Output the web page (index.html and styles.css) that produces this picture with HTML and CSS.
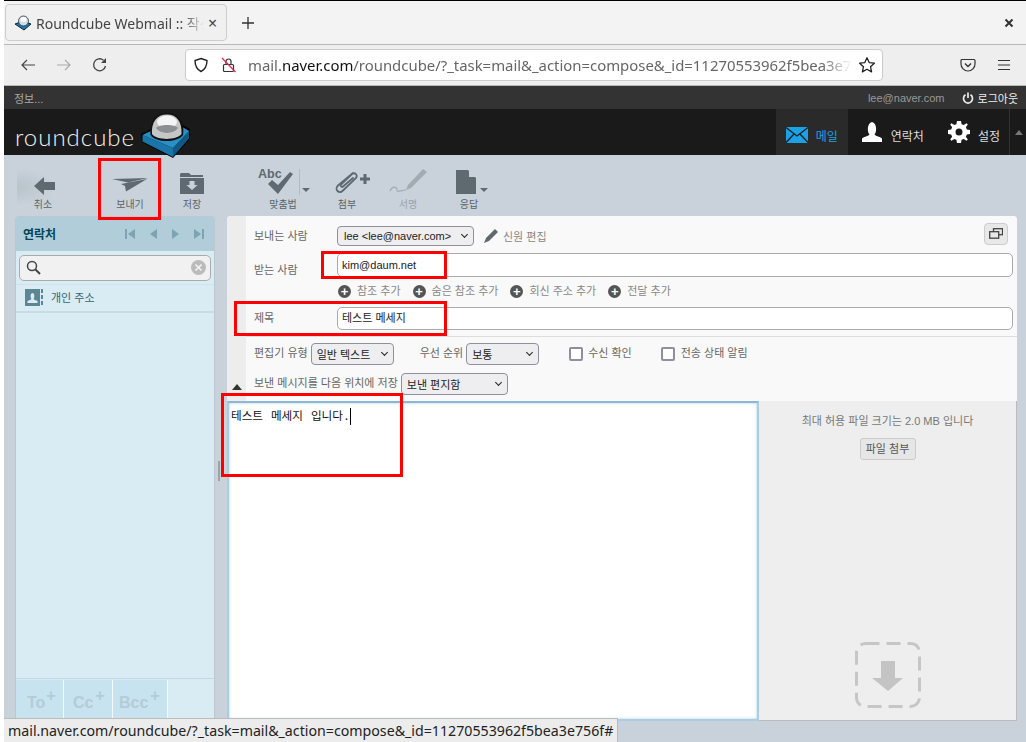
FILE: index.html
```html
<!DOCTYPE html>
<html lang="ko">
<head>
	<meta charset="utf-8" />
	<title>Roundcube Webmail :: 작성</title>
	<link rel="stylesheet" href="styles.css">
</head>
<body>
<div id="browser">
	<div class="tabbar">
		<div class="tab">
			<svg class="favicon" width="18" height="18" viewBox="0 0 18 18"><path d="M1 10 L9 7 L17 10 L10 16 Z" fill="#1b79ad" stroke="#123" stroke-width="1"/><ellipse cx="9.5" cy="7" rx="5" ry="5" fill="#d8dde2" stroke="#234" stroke-width=".8"/><ellipse cx="9.5" cy="5.5" rx="3" ry="2.4" fill="#fff"/></svg>
			<span class="tab-title">Roundcube Webmail :: 작성</span>
			<span class="tab-close">×</span>
		</div>
		<svg class="newtab" width="14" height="14" viewBox="0 0 14 14"><path d="M7 1V13M1 7H13" stroke="#333" stroke-width="1.3"/></svg>
		<svg class="winclose" width="10" height="10" viewBox="0 0 10 10"><path d="M1.5 1.5L8.5 8.5M8.5 1.5L1.5 8.5" stroke="#2e3436" stroke-width="2"/></svg>
	</div>
	<div class="navbar">
		<svg class="nav-icon" width="16" height="16" viewBox="0 0 16 16"><path d="M15 8H2M7 3L2 8L7 13" fill="none" stroke="#444" stroke-width="1.2"/></svg>
		<svg class="nav-icon off" width="16" height="16" viewBox="0 0 16 16"><path d="M1 8H14M9 3L14 8L9 13" fill="none" stroke="#aaa" stroke-width="1.2"/></svg>
		<svg class="nav-icon" width="16" height="16" viewBox="0 0 16 16"><path d="M13.5 9A6 6 0 1 1 11.5 3.2" fill="none" stroke="#444" stroke-width="1.3"/><path d="M14 1V6H9Z" fill="#444"/></svg>
		<div class="urlbar">
			<svg class="url-shield" width="16" height="16" viewBox="0 0 16 16"><path d="M8 1.5L14 3.5C14 9 12 12.5 8 14.5C4 12.5 2 9 2 3.5Z" fill="none" stroke="#222" stroke-width="1.4"/></svg>
			<svg class="url-lock" width="16" height="16" viewBox="0 0 16 16"><rect x="2.5" y="7.5" width="10" height="7" rx="1" fill="none" stroke="#333" stroke-width="1.2"/><path d="M5 7.5V4.5A2.5 2.5 0 0 1 10 4.5V7.5" fill="none" stroke="#333" stroke-width="1.2"/><path d="M1 1L14.5 15" stroke="#e22850" stroke-width="1.2"/></svg>
			<span class="url-text">mail.<b>naver.com</b>/roundcube/?_task=mail&amp;_action=compose&amp;_id=11270553962f5bea3e756f#</span>
			<svg class="url-star" width="18" height="18" viewBox="0 0 18 18"><path d="M9 1.8L11.2 6.6L16.4 7.2L12.5 10.7L13.6 15.9L9 13.3L4.4 15.9L5.5 10.7L1.6 7.2L6.8 6.6Z" fill="none" stroke="#222" stroke-width="1.3" stroke-linejoin="round"/></svg>
		</div>
		<svg class="pocket" width="16" height="16" viewBox="0 0 16 16"><path d="M2 2.5H14A1 1 0 0 1 15 3.5V7A7 7 0 0 1 1 7V3.5A1 1 0 0 1 2 2.5Z" fill="none" stroke="#333" stroke-width="1.2"/><path d="M5 6.5L8 9.5L11 6.5" fill="none" stroke="#333" stroke-width="1.4"/></svg>
		<svg class="hamburger" width="14" height="12" viewBox="0 0 14 12"><path d="M1 1.5H13M1 6H13M1 10.5H13" stroke="#333" stroke-width="1.2"/></svg>
	</div>

	<div id="page">
		<div class="topline">
			<span class="topline-info">정보...</span>
			<span class="topline-user">lee@naver.com</span>
			<span class="logout">
				<svg width="12" height="12" viewBox="0 0 12 12"><path d="M3.5 2.8A4.5 4.5 0 1 0 8.5 2.8" fill="none" stroke="#eee" stroke-width="1.7"/><path d="M6 .5V6" stroke="#eee" stroke-width="1.7"/></svg>
				로그아웃
			</span>
		</div>
		<div class="header">
			<div class="logo">
				<span class="logo-text">roundcube</span>
				<svg class="logo-cube" width="50" height="46" viewBox="0 0 50 46"><path d="M0 21L12 15L38 10L49 16L49 26L32 45L1 29Z" fill="#000"/><path d="M1.500 22L32 35V44L1.500 28.500Z" fill="#1b75a8"/><path d="M32 35L48 18V25.500L32 44Z" fill="#0f5a85"/><path d="M1.500 22L14 16L38 12L48 18L32 35Z" fill="#2a8fc6"/><path d="M9.500 22C8 8 15 0 26 0C37 0 44 8 42 22C36 30 15 30 9.500 22Z" fill="#111"/><path d="M11 21C10 9 16 1.500 26 1.500C36 1.500 41 9 40.500 21C35 27.500 16 27.500 11 21Z" fill="#c4c6c8"/><ellipse cx="26" cy="9" rx="10" ry="6.500" fill="#f4f4f4"/><path d="M15 15C20 21.500 32 21.500 37 15C34 11 18 11 15 15Z" fill="#8d9092"/></svg>
			</div>
			<nav class="taskbar">
				<a class="task active">
					<svg class="mail-icon" width="22" height="16" viewBox="0 0 22 16"><rect width="22" height="16" fill="#1ba1e6"/><path d="M0 .5L11 9L22 .5M0 15.500L8 7M22 15.500L14 7" fill="none" stroke="#1a1a1a" stroke-width="1.2"/></svg>
					<span>메일</span>
				</a>
				<a class="task contacts">
					<svg width="20" height="20" viewBox="0 0 20 20"><path d="M0 20V16.500C2 14.500 6 14.500 7.500 12.500C5 10 5 1 10 0C15 1 15 10 12.500 12.500C14 14.500 18 14.500 20 16.500V20Z" fill="#fff"/></svg>
					<span>연락처</span>
				</a>
				<a class="task settings">
					<svg width="22" height="22" viewBox="0 0 22 22"><path fill="#fff" fill-rule="evenodd" d="M9 0H13L13.600 3.200 15.700 4.100 18.500 2.200 19.800 3.500 17.900 6.300 18.800 8.400 22 9V13L18.800 13.600 17.900 15.700 19.800 18.500 18.500 19.800 15.700 17.900 13.600 18.800 13 22H9L8.400 18.800 6.300 17.900 3.500 19.800 2.200 18.500 4.100 15.700 3.200 13.600 0 13V9L3.200 8.400 4.100 6.300 2.200 3.500 3.500 2.200 6.300 4.100 8.400 3.200ZM11 7.500A3.500 3.500 0 1 0 11 14.500A3.500 3.500 0 1 0 11 7.500Z"/></svg>
					<span>설정</span>
				</a>
				<span class="task-toggle"></span>
			</nav>
		</div>

		<div class="toolbar">
			<a class="tbtn cancel">
				<svg width="21" height="18" viewBox="0 0 21 18"><path d="M0 9L10 0V5H21V13H10V18Z" fill="#5f6a70"/></svg>
				<span>취소</span>
			</a>
			<a class="tbtn send">
				<svg width="36" height="16" viewBox="0 0 36 16"><path d="M0 3L36 2L16 6.500Z M9 8L35 3L14 15.500L13 10Z" fill="#5f6a70"/></svg>
				<span>보내기</span>
			</a>
			<a class="tbtn savebtn">
				<svg width="26" height="22" viewBox="0 0 26 22"><path d="M2 1H10L12 3H24V5H1V2Z" fill="#5f6a70"/><path d="M1 6H25V22H1Z" fill="#5f6a70"/><path d="M10.500 9H15.500V13H18.500L13 18L7.500 13H10.500Z" fill="#c9d2da"/></svg>
				<span>저장</span>
			</a>
			<a class="tbtn spell">
				<span class="abc">Abc</span>
				<svg class="check" width="25" height="22" viewBox="0 0 25 22"><path d="M0 12L4 8L10 13L22 0L25 2L10 22Z" fill="#5f6a70"/></svg>
				<span class="tlabel">맞춤법</span>
				<i class="drop"></i>
			</a>
			<a class="tbtn attach">
				<svg width="36" height="23" viewBox="0 0 36 23"><path d="M19 2L4 14.500C0 18.500 5 23.500 9 19.500L22 7C24 4 21 1 18 3L7 13.500C6 15.500 8 16.500 9 15.500L19 7" fill="none" stroke="#5f6a70" stroke-width="1.800" stroke-linecap="round"/><path d="M31 3V13M26 8H36" stroke="#5f6a70" stroke-width="3"/></svg>
				<span>첨부</span>
			</a>
			<a class="tbtn sign">
				<svg width="38" height="27" viewBox="0 0 38 27"><path d="M34 1L38 4L22 20L17 22L19 17Z" fill="#a3abb1"/><path d="M1 23C3 18 8 18 8 22C8 25 12 22 17 22" fill="none" stroke="#a3abb1" stroke-width="1.200"/></svg>
				<span>서명</span>
			</a>
			<a class="tbtn reply">
				<svg width="20" height="24" viewBox="0 0 20 24"><path d="M0 0H12L20 8V24H0Z" fill="#5f6a70"/><path d="M13 0L20 7H13Z" fill="#c9d2da"/></svg>
				<span>응답</span>
				<i class="drop"></i>
			</a>
		</div>

		<div class="workspace">
			<aside class="contacts-panel">
				<div class="panel-head">
					<b>연락처</b>
					<span class="pager">
						<svg width="10" height="10" viewBox="0 0 10 10"><path d="M0 0H2V10H0ZM10 0V10L3 5Z" fill="#7ea3b3"/></svg>
						<svg width="7" height="10" viewBox="0 0 7 10"><path d="M7 0V10L0 5Z" fill="#7ea3b3"/></svg>
						<svg width="7" height="10" viewBox="0 0 7 10"><path d="M0 0V10L7 5Z" fill="#7ea3b3"/></svg>
						<svg width="10" height="10" viewBox="0 0 10 10"><path d="M10 0H8V10H10ZM0 0V10L7 5Z" fill="#7ea3b3"/></svg>
					</span>
				</div>
				<div class="search-wrap">
					<div class="searchbox">
						<svg width="15" height="15" viewBox="0 0 15 15"><circle cx="6" cy="6" r="4.500" fill="none" stroke="#444" stroke-width="1.500"/><path d="M9.500 9.500L14 14" stroke="#444" stroke-width="2"/></svg>
						<svg width="15" height="15" viewBox="0 0 15 15"><circle cx="7.500" cy="7.500" r="7.500" fill="#bbb"/><path d="M4.500 4.500L10.500 10.500M10.500 4.500L4.500 10.500" stroke="#f4f4f4" stroke-width="1.600"/></svg>
					</div>
				</div>
				<div class="source">
					<svg width="18" height="17" viewBox="0 0 18 17"><rect width="15" height="17" fill="#5c8595"/><path d="M2.500 14V12C4 11 6 11 6.500 10C5 8 5.500 4 7.500 4C9.500 4 10 8 8.500 10C9 11 11 11 12.500 12V14Z" fill="#d9ebf3"/><path d="M16 0H18V4H16ZM16 6H18V10H16ZM16 12H18V16H16Z" fill="#5c8595"/></svg>
					<span>개인 주소</span>
				</div>
				<div class="panel-fill"></div>
				<div class="recipients">
					<a>To<i>+</i></a>
					<a>Cc<i>+</i></a>
					<a>Bcc<i>+</i></a>
				</div>
			</aside>

			<main class="compose">
				<div class="headers">
					<div class="frow from-row">
						<label>보내는 사람</label>
						<span class="sel sel-from">lee &lt;lee@naver.com&gt;</span>
						<a class="sig-edit">
							<svg width="14" height="14" viewBox="0 0 14 14"><path d="M11 0L14 3L5 12L0 14L2 9Z" fill="#5f6a70"/></svg>
							신원 편집
						</a>
						<span class="popout"><svg width="14" height="11" viewBox="0 0 14 11"><rect x="4.500" y=".7" width="9" height="6" fill="none" stroke="#444" stroke-width="1.300"/><rect x=".7" y="3.700" width="9" height="6.500" fill="#e8e8e8" stroke="#444" stroke-width="1.300"/></svg></span>
					</div>
					<div class="frow to-row">
						<label>받는 사람</label>
						<div class="field">kim@daum.net</div>
					</div>
					<div class="links">
						<a>참조 추가</a>
						<a>숨은 참조 추가</a>
						<a>회신 주소 추가</a>
						<a>전달 추가</a>
					</div>
					<div class="frow subject-row">
						<label>제목</label>
						<div class="field subject">테스트 메세지</div>
					</div>
					<div class="options">
						<div class="opt-line">
							<label>편집기 유형</label>
							<span class="sel sel-editor">일반 텍스트</span>
							<label class="prio">우선 순위</label>
							<span class="sel sel-prio">보통</span>
							<span class="cbox first"></span><label>수신 확인</label>
							<span class="cbox"></span><label>전송 상태 알림</label>
						</div>
						<div class="opt-line">
							<label>보낸 메시지를 다음 위치에 저장</label>
							<span class="sel sel-store">보낸 편지함</span>
						</div>
						<i class="collapse"></i>
					</div>
				</div>
				<div class="bottom">
					<div class="editor">테스트 메세지 입니다.<i class="caret"></i></div>
					<div class="attachments">
						<p>최대 허용 파일 크기는 2.0 MB 입니다</p>
						<a class="attach-btn">파일 첨부</a>
						<svg class="dropzone" width="66" height="66" viewBox="0 0 66 66"><rect x="1.500" y="1.500" width="63" height="63" rx="9" fill="none" stroke="#c6c6c6" stroke-width="3" stroke-dasharray="14 7"/><path d="M26 19H40V36H48L33 49L17 36H26Z" fill="#c4c4c4"/></svg>
					</div>
				</div>
			</main>
		</div>
		<i class="splitter"></i>
	</div>
</div>

<div class="mark mark-send"></div>
<div class="mark mark-to"></div>
<div class="mark mark-subject"></div>
<div class="mark mark-body"></div>
<div class="statusbar">mail.naver.com/roundcube/?_task=mail&amp;_action=compose&amp;_id=11270553962f5bea3e756f#</div>
</body>
</html>
```

FILE: styles.css
```css
html, body {
	margin: 0;
	height: 742px;
	overflow: hidden;
}
body {
	background: #fff;
	font-family: "Liberation Sans", "Noto Sans CJK KR", sans-serif;
	font-size: 11px;
	color: #666;
}
a { color: inherit; }
label { white-space: nowrap; }

#browser {
	margin-left: 4px;
	height: 741px;
	border-top: 1px solid #000;
	display: flex;
	flex-direction: column;
	font-family: "Noto Sans", "Noto Sans CJK KR", sans-serif;
}

/* browser chrome */
.tabbar {
	height: 43px;
	background: #f3f3f3;
	border-bottom: 1px solid #b8b8b8;
	display: flex;
	align-items: center;
	padding-left: 1px;
}
.tab {
	width: 222px;
	height: 37px;
	box-sizing: border-box;
	background: #f0f0f0;
	border: 1px solid #ccc;
	border-radius: 4px;
	display: flex;
	align-items: center;
	padding-left: 8px;
}
.tab-title {
	margin-left: 4px;
	width: 168px;
	font-size: 14px;
	color: #444;
	white-space: nowrap;
	overflow: hidden;
	-webkit-mask-image: linear-gradient(to right, #000 88%, transparent);
}
.tab-close { font-size: 16px; color: #444; margin-left: 4px; }
.newtab { margin-left: 14px; }
.winclose { margin-left: auto; margin-right: 12px; }

.navbar {
	height: 40px;
	background: #eeeeee;
	border-bottom: 1px solid #b8b8b8;
	display: flex;
	align-items: center;
	padding-left: 16px;
}
.nav-icon { margin-right: 20px; }
.urlbar {
	width: 698px;
	height: 32px;
	box-sizing: border-box;
	margin-left: 57px;
	background: #fff;
	border: 1px solid #ccc;
	border-radius: 4px;
	display: flex;
	align-items: center;
	padding-left: 7px;
}
.url-lock { margin-left: 12px; }
.url-text {
	margin-left: 11px;
	width: 604px;
	font-size: 14.9px;
	color: #666;
	white-space: nowrap;
	overflow: hidden;
	-webkit-mask-image: linear-gradient(to right, #000 95%, transparent);
}
.url-text b { font-weight: normal; color: #111; }
.url-star { margin-left: 6px; }
.pocket { margin-left: 77px; }
.hamburger { margin-left: 21px; }

/* page */
#page {
	flex: 1;
	position: relative;
	background: #c9d2da;
	display: flex;
	flex-direction: column;
	font-family: "Liberation Sans", "Noto Sans CJK KR", sans-serif;
}
.topline {
	height: 23px;
	background: #333;
	color: #aaa;
	display: flex;
	align-items: center;
	padding: 0 8px 0 10px;
}
.topline-user { margin-left: auto; color: #999; }
.logout { margin-left: 17px; color: #eee; display: flex; align-items: center; gap: 4px; }

.header {
	height: 46px;
	background: #1a1a1a;
	display: flex;
	justify-content: space-between;
}
.logo { display: flex; padding-left: 11px; height: 46px; }
.logo-text {
	font-family: "Lato", sans-serif;
	font-weight: 300;
	font-size: 24px;
	letter-spacing: 1px;
	color: #f2f2f2;
	line-height: 56px;
}
.logo-cube { margin: 4px 0 0 6px; position: relative; z-index: 1; }
.taskbar { display: flex; align-items: stretch; }
.task {
	display: flex;
	align-items: center;
	color: #ddd;
	font-size: 12px;
}
.task span { margin-top: 6px; }
.mail-icon { margin-top: 5px; }
.task.active {
	width: 72px;
	background: #2a2a2a;
	color: #1ba1e6;
	justify-content: center;
	gap: 8px;
}
.contacts { margin-left: 14px; gap: 9px; }
.settings { margin-left: 24px; gap: 8px; }
.task-toggle {
	position: relative;
	margin-left: 9px;
	width: 16px;
	border-left: 1px solid #333;
}
.task-toggle::after {
	content: "";
	position: absolute;
	left: 5px;
	top: 21px;
	border: 4px solid transparent;
	border-top: 0;
	border-bottom: 5px solid #777;
}

.toolbar {
	height: 61px;
	display: flex;
	padding-left: 13px;
}
.tbtn {
	position: relative;
	height: 61px;
	display: flex;
	flex-direction: column;
	align-items: center;
	justify-content: flex-end;
	padding-bottom: 4px;
	box-sizing: border-box;
	font-size: 10px;
	color: #5a6368;
}
.tbtn span { margin-top: 2px; line-height: 15px; }
.tbtn.cancel {
	width: 52px;
	background: radial-gradient(ellipse at 0 50%, #b9c3ca, #c9d2da 70%) no-repeat 0 13px / 38px 38px;
}
.tbtn.cancel svg { margin-left: 3px; }
.tbtn.send { width: 62px; margin-left: 30px; }
.tbtn.send svg { margin-bottom: 3px; }
.tbtn.savebtn { width: 62px; }
.tbtn.savebtn svg { margin-bottom: 1px; }
.tbtn.spell { width: 60px; margin-left: 30px; }
.tbtn.spell::after {
	content: "";
	position: absolute;
	left: 46px;
	top: 14px;
	width: 1px;
	height: 26px;
	background: #b0bac2;
}
.abc {
	position: absolute;
	left: 5px;
	top: 12px;
	margin: 0 !important;
	font-size: 12.5px;
	font-weight: bold;
	color: #5f6a70;
}
.check { margin: 0 0 1px -5px; }
.tbtn.attach { width: 66px; margin-left: 1px; }
.tbtn.attach svg { margin-bottom: 1px; margin-left: 10px; }
.tbtn.sign { width: 56px; color: #9aa3a9; }
.tbtn.reply { width: 66px; }
.drop {
	position: absolute;
	right: 3px;
	top: 33px;
	border: 4px solid transparent;
	border-bottom: 0;
	border-top: 4px solid #5f6a70;
}
.tbtn.reply .drop { right: 14px; }
.tbtn.reply svg { margin-bottom: 1px; margin-left: -6px; }

.workspace {
	flex: 1;
	display: flex;
	padding: 0 9px 21px 11px;
	min-height: 0;
}

/* contacts panel */
.contacts-panel {
	width: 200px;
	box-sizing: border-box;
	background: #d9ebf3;
	border-radius: 4px 4px 0 0;
	border: 1px solid #bcc8d0;
	border-width: 1px 1px 0;
	display: flex;
	flex-direction: column;
}
.panel-head {
	height: 34px;
	background: #b0cdd9;
	display: flex;
	align-items: center;
	justify-content: space-between;
	padding: 0 10px 0 7px;
	font-size: 12px;
	color: #004458;
}
.panel-head b { margin-bottom: 2px; }
.pager { display: flex; align-items: center; gap: 15px; }
.search-wrap {
	height: 34px;
	display: flex;
	align-items: center;
	padding: 0 3px;
	box-sizing: border-box;
	border-bottom: 1px solid #d0e3ec;
	background: #d9ebf3;
}
.searchbox {
	flex: 1;
	height: 26px;
	background: #f1f1f1;
	border: 1px solid #aaa;
	border-radius: 5px;
	display: flex;
	align-items: center;
	justify-content: space-between;
	padding: 0 4px 0 6px;
	box-sizing: border-box;
}
.source {
	height: 28px;
	box-sizing: border-box;
	border-bottom: 2px solid #c8dce5;
	display: flex;
	align-items: center;
	padding: 0 0 2px 9px;
	gap: 8px;
	color: #376572;
}
.panel-fill { flex: 1; }
.recipients {
	height: 39px;
	border-top: 1px solid #c2d8e2;
	display: flex;
	padding-top: 1px;
	margin-bottom: 2px;
}
.recipients a {
	background: #c7e3ef;
	border-right: 1px solid #f3fafd;
	width: 36px;
	padding-left: 11px;
	font-size: 16px;
	font-weight: bold;
	color: #b4ccd6;
	line-height: 46px;
	position: relative;
}
.recipients a + a { padding-left: 9px; width: 39px; }
.recipients a + a + a { padding-left: 6px; width: 48px; }
.recipients i {
	position: absolute;
	right: 7px;
	top: -7px;
	font-style: normal;
	font-size: 17px;
}

/* compose form */
.compose {
	margin-left: 12px;
	flex: 1;
	display: flex;
	flex-direction: column;
	background: #f9f9f9;
	border-radius: 4px 4px 0 0;
	overflow: hidden;
	min-width: 0;
}
.headers {
	height: 185px;
	position: relative;
	padding-left: 19px;
	background: #f9f9f9;
	background-image: linear-gradient(to right, #ededed 19px, transparent 19px);
	box-sizing: border-box;
	padding-top: 8px;
}
.frow {
	display: flex;
	align-items: center;
	padding-left: 8px;
}
.frow label { width: 83px; flex: none; }
.from-row { height: 24px; }
.from-row label { margin-bottom: 2px; }
.sel {
	height: 20px;
	background: #eeeef1;
	border: 1px solid #8f8f9d;
	border-radius: 4px;
	display: inline-flex;
	align-items: center;
	padding-left: 5px;
	box-sizing: border-box;
	color: #222;
	position: relative;
	white-space: nowrap;
}
.sel::after {
	content: "";
	position: absolute;
	right: 6px;
	top: 50%;
	width: 4px;
	height: 4px;
	margin-top: -4px;
	border-right: 1.5px solid #222;
	border-bottom: 1.5px solid #222;
	transform: rotate(45deg);
}
.sel-from { width: 137px; padding-left: 6px; }
.sig-edit {
	margin-left: 10px;
	display: flex;
	align-items: center;
	gap: 5px;
	color: #888;
}
.popout {
	margin-left: auto;
	margin-right: 9px;
	margin-bottom: 5px;
	width: 24px;
	height: 22px;
	background: #e8e8e8;
	border: 1px solid #ccc;
	border-radius: 4px;
	display: flex;
	align-items: center;
	justify-content: center;
	box-sizing: border-box;
}
.field {
	flex: 1;
	height: 24px;
	margin-right: 4px;
	background: #fff;
	border: 1px solid #aaa;
	border-radius: 5px;
	box-sizing: border-box;
	padding-left: 4px;
	line-height: 22px;
	color: #222;
}
.to-row { margin-top: 4px; }
.to-row label { margin-top: 9px; }
.subject-row label { margin-bottom: 3px; }
.subject { height: 23px; line-height: 20px; }
.links {
	height: 30px;
	box-sizing: border-box;
	padding-bottom: 4px;
	display: flex;
	align-items: center;
	padding-left: 92px;
	gap: 12px;
	color: #888;
}
.links a::before {
	content: "+";
	display: inline-block;
	width: 13px;
	height: 13px;
	margin-right: 6px;
	border-radius: 50%;
	background: #555;
	color: #fff;
	font: bold 13px/13px "Liberation Sans", sans-serif;
	text-align: center;
	vertical-align: -1px;
}
.options {
	margin-top: 6px;
	padding: 6px 0 0 8px;
	border-top: 1px solid #ddd;
}
.opt-line {
	height: 22px;
	display: flex;
	align-items: center;
	margin-bottom: 8px;
}
.opt-line label { margin: 0 3px 4px 0; }
.sel-editor { width: 83px; height: 22px; }
.opt-line .prio { margin-left: 26px; }
.sel-prio { width: 73px; height: 22px; }
.sel-store { width: 107px; height: 22px; }
.cbox {
	width: 14px;
	height: 14px;
	box-sizing: border-box;
	border: 2px solid #8f8f9d;
	border-radius: 2px;
	background: #fff;
	margin: 0 6px 0 26px;
}
.cbox.first { margin: 0 5px 0 30px; }
.collapse {
	position: absolute;
	left: 5px;
	bottom: 11px;
	border: 5px solid transparent;
	border-top: 0;
	border-bottom: 6px solid #333;
}

.bottom { flex: 1; display: flex; min-height: 0; }
.editor {
	width: 532px;
	box-sizing: border-box;
	background: #fff;
	border: 2px solid #a9cde3;
	border-top-color: #8db8d4;
	box-shadow: inset 0 0 3px #a9cde3;
	padding: 5px 2px;
	font-family: "Liberation Mono", "Noto Sans CJK KR", monospace;
	font-size: 11.6px;
	word-spacing: 1px;
	line-height: 17px;
	color: #111;
}
.caret {
	display: inline-block;
	width: 1px;
	height: 17px;
	margin-left: 0;
	background: #000;
	vertical-align: top;
}
.attachments {
	flex: 1;
	background: #eee;
	border-right: 1px solid #bbb;
	border-bottom: 1px solid #bbb;
	display: flex;
	flex-direction: column;
	align-items: center;
}
.attachments p { margin: 13px 0 0; line-height: 14px; color: #777; }
.attach-btn {
	margin-top: 10px;
	height: 22px;
	width: 56px;
	box-sizing: border-box;
	background: #e6e6e6;
	border: 1px solid #ccc;
	border-radius: 3px;
	text-align: center;
	line-height: 20px;
	color: #555;
}
.dropzone { margin-top: auto; margin-bottom: 12px; }

.splitter {
	position: absolute;
	left: 214px;
	top: 375px;
	width: 2px;
	height: 20px;
	background: #9aa3a9;
}

/* annotation boxes drawn on the screenshot */
.mark {
	position: absolute;
	border: 3px solid #f00;
	box-sizing: border-box;
}
.mark-send { left: 98px; top: 158px; width: 63px; height: 62px; }
.mark-to { left: 321px; top: 251px; width: 126px; height: 28px; }
.mark-subject { left: 234px; top: 301px; width: 213px; height: 35px; }
.mark-body { left: 221px; top: 393px; width: 182px; height: 84px; }

.statusbar {
	position: absolute;
	left: 4px;
	bottom: 0;
	width: 614px;
	height: 24px;
	box-sizing: border-box;
	background: #ececec;
	border-top: 1px solid #bbb;
	border-right: 1px solid #bbb;
	padding-left: 4px;
	font-family: "Noto Sans", sans-serif;
	font-size: 14.2px;
	line-height: 23px;
	color: #222;
	white-space: nowrap;
	overflow: hidden;
}
```
